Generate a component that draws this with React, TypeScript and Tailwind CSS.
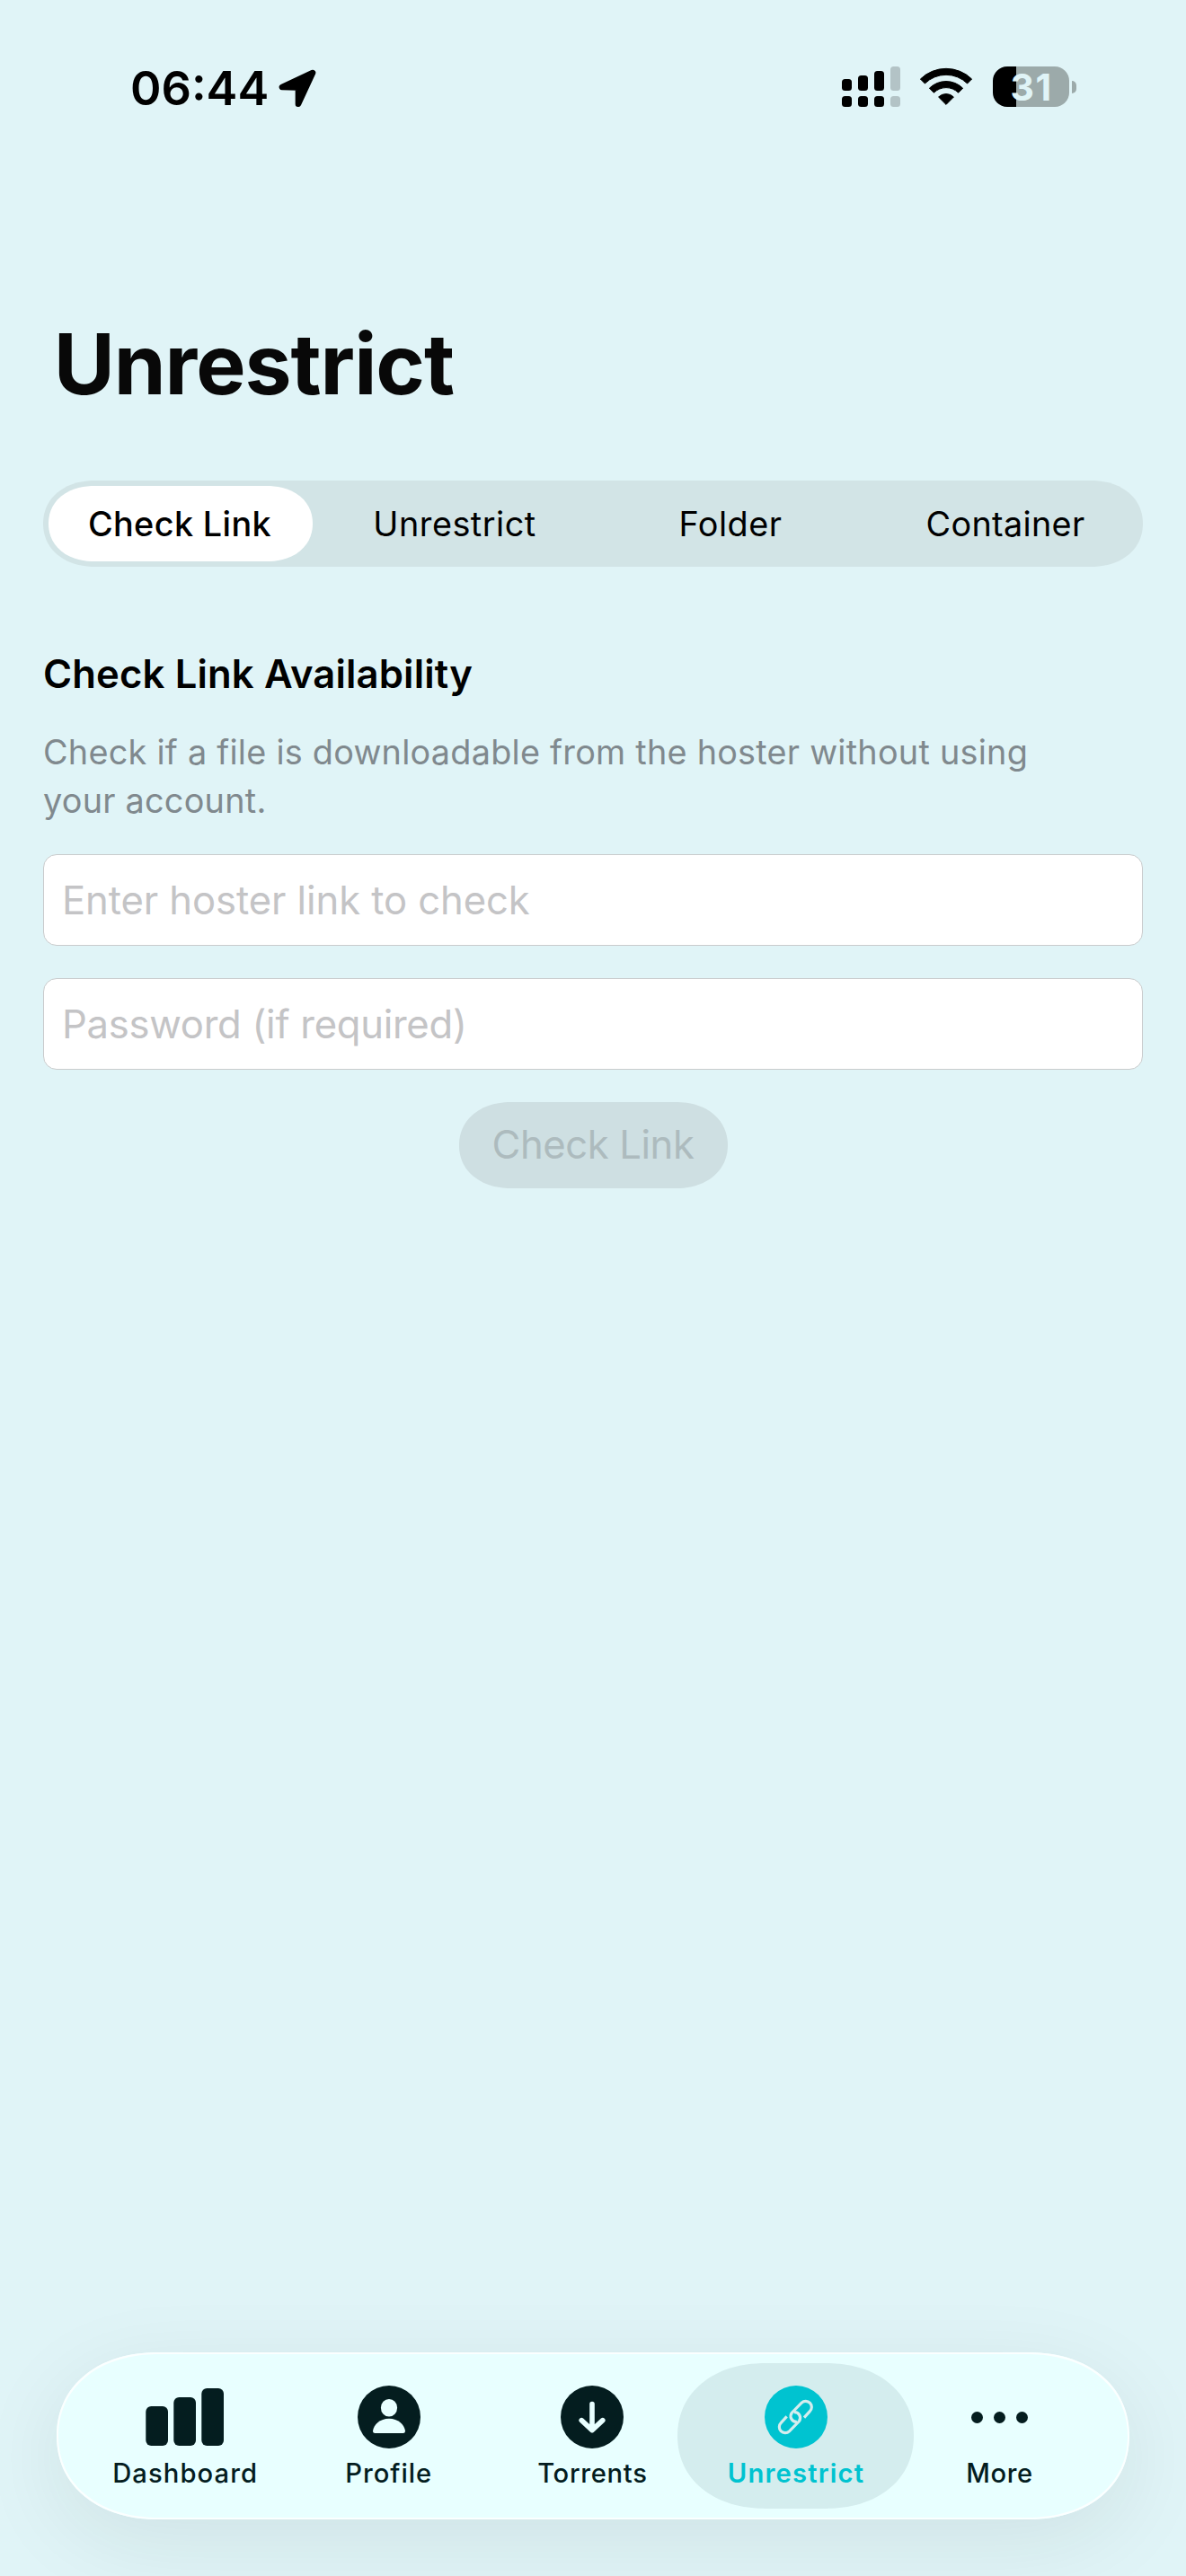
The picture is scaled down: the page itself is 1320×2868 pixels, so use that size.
import type { ReactNode } from "react";

function LocationArrow() {
  return (
    <svg className="h-[42.7px] w-[42px]" viewBox="0 0 126 128">
      <path
        d="M114 12 L12 60 L66 61 L66 116 Z"
        fill="#000"
        stroke="#000"
        strokeWidth="20"
        strokeLinejoin="round"
      />
    </svg>
  );
}

function SignalIcon() {
  const bars = [
    { x: 0, top: 14, color: "#000" },
    { x: 18, top: 10, color: "#000" },
    { x: 36, top: 5, color: "#000" },
    { x: 54, top: 0, color: "#b3c3c6" },
  ];
  return (
    <svg className="h-[45px] w-[65px]" viewBox="0 0 65 45">
      {bars.map((b) => (
        <g key={b.x} fill={b.color}>
          <rect x={b.x} y={b.top} width="11" height={27 - b.top} rx="3.5" />
          <rect x={b.x} y="33" width="11" height="12" rx="3.5" />
        </g>
      ))}
    </svg>
  );
}

function WifiIcon() {
  return (
    <svg className="h-[43px] w-[58px]" viewBox="-29 -42 58 43">
      <g fill="#000" stroke="#000" strokeWidth="1" strokeLinejoin="round">
        <path d="M-28.6 -29 A40.9 40.9 0 0 1 28.6 -29 L23.6 -24 A33.6 33.6 0 0 0 -23.6 -24 Z" />
        <path d="M-18.6 -18.8 A26.4 26.4 0 0 1 18.6 -18.8 L13.6 -13.8 A19.3 19.3 0 0 0 -13.6 -13.8 Z" />
        <path d="M0 -0.6 L-8.4 -9 A12 12 0 0 1 8.4 -9 Z" />
      </g>
    </svg>
  );
}

function Battery() {
  return (
    <div className="flex items-center gap-[3px]">
      <div className="flex h-[45px] w-[85px] items-center justify-center rounded-[16px] bg-[linear-gradient(to_right,#000_26px,#9caaaa_26px)]">
        <span className="mt-px pl-px text-[41px] leading-none font-bold tracking-[1.5px] text-[#e0f4f7]">
          31
        </span>
      </div>
      <div className="h-[14px] w-[5px] rounded-r-full bg-[#9caaaa]" />
    </div>
  );
}

function StatusBar() {
  return (
    <div className="flex h-[193px] items-center justify-between pr-[122px] pl-[145px]">
      <div className="flex items-center gap-[11px] pt-[3px]">
        <span className="text-[52.3px] leading-none font-semibold">06:44</span>
        <LocationArrow />
      </div>
      <div className="flex items-center gap-[22.7px]">
        <SignalIcon />
        <WifiIcon />
        <Battery />
      </div>
    </div>
  );
}

function SegmentedControl() {
  return (
    <div className="mt-[70px] grid h-24 grid-cols-4 rounded-[58px/48px] bg-[#d2e4e6] text-[37.8px] [corner-shape:superellipse(1.1)]">
      <div className="m-1.5 flex items-center justify-center rounded-[51px/42px] bg-white pr-[2px] font-medium tracking-[0.37px] [corner-shape:superellipse(1.1)]">
        Check Link
      </div>
      <div className="flex items-center justify-center pr-[2px] tracking-[0.5px]">Unrestrict</div>
      <div className="flex items-center justify-center tracking-[0.5px]">Folder</div>
      <div className="flex items-center justify-center tracking-[0.3px]">Container</div>
    </div>
  );
}

function Field({ placeholder, className }: { placeholder: string; className: string }) {
  return (
    <input
      placeholder={placeholder}
      className={`h-[102px] w-full rounded-[15px] border border-[#c9cbcc] bg-white px-5 text-[43.6px] outline-none placeholder:text-[#c4c4c6] placeholder:opacity-100 ${className}`}
    />
  );
}

function DashboardIcon() {
  return (
    <svg className="h-16 w-[88px]" viewBox="0 0 88 64" fill="currentColor">
      <rect x="0.3" y="20" width="24.7" height="44" rx="6" />
      <rect x="31.3" y="10" width="24.7" height="54" rx="6" />
      <rect x="62.3" y="0" width="24.7" height="64" rx="6" />
    </svg>
  );
}

function ProfileIcon() {
  return (
    <svg className="size-[70px]" viewBox="0 0 70 70">
      <circle cx="35" cy="35" r="35" fill="currentColor" />
      <g fill="#e8ffff">
        <ellipse cx="35" cy="24.8" rx="9.1" ry="9.8" />
        <path d="M19 53 Q16.8 53 17 50.6 C17.8 43.5 25 36.8 35 36.8 C45 36.8 52.2 43.5 53 50.6 Q53.2 53 51 53 Z" />
      </g>
    </svg>
  );
}

function DownloadIcon() {
  return (
    <svg className="size-[70px]" viewBox="0 0 70 70">
      <circle cx="35" cy="35" r="35" fill="currentColor" />
      <path
        d="M35 20.6 V48.5 M23.2 38.6 L35 49.6 L46.8 38.6"
        fill="none"
        stroke="#e8ffff"
        strokeWidth="5.6"
        strokeLinecap="round"
        strokeLinejoin="round"
      />
    </svg>
  );
}

function LinkIcon() {
  return (
    <svg className="size-[70px]" viewBox="15 12 210 210">
      <circle cx="120" cy="117" r="105" fill="currentColor" />
      <g fill="none" stroke="#d4edee" strokeWidth="9.5">
        <path d="M147 119 L166 98 A19.5 19.5 0 0 0 138.6 69.6 L106 102.6 A19 19 0 0 0 123 133" />
        <path d="M89 115 L70 136 A19.5 19.5 0 0 0 97.4 164.4 L130 131.4 A19 19 0 0 0 113 101" />
      </g>
    </svg>
  );
}

function MoreIcon() {
  return (
    <svg className="h-[13px] w-[63px]" viewBox="0 0 63 13" fill="currentColor">
      <circle cx="6.5" cy="6.5" r="6.5" />
      <circle cx="31.5" cy="6.5" r="6.5" />
      <circle cx="56.5" cy="6.5" r="6.5" />
    </svg>
  );
}

function Tab({
  icon,
  label,
  tracking,
  active = false,
}: {
  icon: ReactNode;
  label: string;
  tracking: string;
  active?: boolean;
}) {
  return (
    <div
      className={`relative flex w-[226.6px] flex-col items-center pt-[25px] ${
        active ? "font-semibold text-[#00c3d0]" : "font-medium text-[#041d1f]"
      }`}
    >
      {active && (
        <div className="absolute inset-y-0 -right-[18.2px] -left-[18.2px] rounded-[98px/81px] bg-[#d4edee] [corner-shape:superellipse(1.1)]" />
      )}
      <div className="relative flex h-[70px] items-center">{icon}</div>
      <div className={`relative mt-[10.4px] text-[29.2px] leading-9 ${tracking}`}>{label}</div>
    </div>
  );
}

function TabBar() {
  return (
    <nav className="mx-[63px] mt-auto mb-[63px] flex h-[186px] rounded-[112px/93px] bg-[#e8ffff] py-3 pl-[29.9px] shadow-[inset_0_0_0_2px_#fbffff,0_24px_96px_rgba(0,40,20,0.08)] [corner-shape:superellipse(1.1)]">
      <Tab icon={<DashboardIcon />} label="Dashboard" tracking="tracking-[1.1px]" />
      <Tab icon={<ProfileIcon />} label="Profile" tracking="tracking-[0.96px]" />
      <Tab icon={<DownloadIcon />} label="Torrents" tracking="tracking-[0.69px]" />
      <Tab icon={<LinkIcon />} label="Unrestrict" tracking="tracking-[1.18px]" active />
      <Tab icon={<MoreIcon />} label="More" tracking="tracking-[0.57px]" />
    </nav>
  );
}

export default function App() {
  return (
    <div className="flex h-[2868px] w-[1320px] flex-col overflow-hidden bg-[#e0f4f7] font-['Inter',sans-serif] text-black">
      <StatusBar />
      <main className="px-12">
        <h1 className="mt-[152px] pl-[11.7px] text-[93px] leading-[120px] font-bold tracking-[-1.03px] text-[#080808]">
          Unrestrict
        </h1>
        <SegmentedControl />
        <h2 className="mt-[90px] text-[43.6px] leading-[60px] font-semibold tracking-[0.15px]">
          Check Link Availability
        </h2>
        <p className="mt-[29px] max-w-[1140px] text-[37.8px] leading-[54px] tracking-[0.24px] text-[#80898e]">
          Check if a file is downloadable from the hoster without using your account.
        </p>
        <Field placeholder="Enter hoster link to check" className="mt-[33px] tracking-[-0.09px]" />
        <Field placeholder="Password (if required)" className="mt-9 tracking-[-0.28px]" />
        <button className="mx-auto mt-9 flex h-24 w-[299px] items-center justify-center rounded-[58px/48px] bg-[#cedfe2] text-[43.6px] tracking-[-0.41px] text-[#adbbbe] [corner-shape:superellipse(1.1)]">
          Check Link
        </button>
      </main>
      <TabBar />
    </div>
  );
}
